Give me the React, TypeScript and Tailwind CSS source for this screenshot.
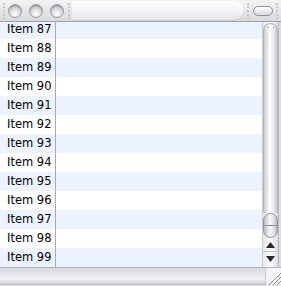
import React from "react";

const items = Array.from({ length: 13 }, (_, i) => 87 + i);

const Light = () => (
  <div className="w-[14px] h-[14px] rounded-full border border-[#9c9ea3] bg-[radial-gradient(circle_at_50%_75%,#ffffff_0%,#dcdde0_45%,#a9abb0_100%)] shadow-[inset_0_1px_1px_rgba(0,0,0,0.25)]" />
);

const Dots = () => <div className="h-[16px] border-l-2 border-dotted border-[#c4c6ca]" />;

const Arrow = ({ up }: { up?: boolean }) => (
  <svg width="9" height="6" viewBox="0 0 9 6">
    {up ? <polygon points="4.5,0 9,6 0,6" fill="#2a2a2a" /> : <polygon points="0,0 9,0 4.5,6" fill="#2a2a2a" />}
  </svg>
);

export default function App() {
  return (
    <div
      className="w-[281px] h-[286px] flex flex-col overflow-hidden bg-[#e4e5e8]"
      style={{ fontFamily: '"DejaVu Sans", "Liberation Sans", sans-serif' }}
    >
      {/* title bar */}
      <div className="h-[22px] flex items-center bg-[linear-gradient(#f4f4f5,#d9dadd)] border-b border-[#9fa2a8] pl-[3px]">
        <Dots />
        <div className="flex gap-[7px] ml-[3px]">
          <Light />
          <Light />
          <Light />
        </div>
        <div className="ml-[4px]">
          <Dots />
        </div>
        <div className="ml-[2px] w-[172px] h-[20px] rounded-r-[10px] bg-[linear-gradient(#ffffff,#f1f2f4_55%,#e2e3e6)] shadow-[inset_0_-1px_0_#c6c8cc]" />
        <div className="ml-[3px]">
          <Dots />
        </div>
        <div className="ml-[4px] w-[20px] h-[10px] rounded-full border border-[#8f9297] bg-[linear-gradient(#ffffff,#d5d7db)]" />
        <div className="ml-[3px]">
          <Dots />
        </div>
      </div>

      {/* content */}
      <div className="flex h-[245px]">
        <div className="flex-1 overflow-hidden">
          <div className="-mt-[2px]">
            {items.map((n, i) => (
              <div key={n} className={`h-[19px] flex ${i % 2 === 0 ? "bg-[#edf3fe]" : "bg-white"}`}>
                <div className="w-[56px] border-r border-[#a7a9ad] pl-[7px] text-[11.5px] leading-[19px] text-black whitespace-nowrap">
                  Item {n}
                </div>
              </div>
            ))}
          </div>
        </div>

        {/* scrollbar */}
        <div className="w-[16px] flex flex-col bg-[linear-gradient(90deg,#e8e9ec,#fbfbfc_50%,#dcdde1)] border-l border-[#c8cace]">
          <div className="mt-[1px] h-[190px] rounded-t-[8px] bg-[linear-gradient(90deg,#c9cbd0,#ffffff_45%,#e3e4e8_80%,#c4c6cb)] border-x border-t border-[#b5b8bd] flex justify-center">
            <div className="mt-[3px] flex gap-[4px]">
              <div className="w-[1px] h-[1px] bg-[#8c8f95]" />
              <div className="w-[1px] h-[1px] bg-[#8c8f95]" />
            </div>
          </div>
          <div className="h-[25px] rounded-[8px] border border-[#8f9298] bg-[linear-gradient(90deg,#b8bbc1,#f7f7f8_45%,#dadce0_80%,#b3b6bc)] flex flex-col justify-center">
            <div className="h-[1px] bg-[#8f9298]" />
          </div>
          <div className="h-[14px] flex items-center justify-center border-b border-[#c3c5ca]">
            <Arrow up />
          </div>
          <div className="h-[14px] flex items-center justify-center">
            <Arrow />
          </div>
        </div>
        <div className="w-[3px] bg-[#dcdde0] border-l border-[#b9bbc0]" />
      </div>

      {/* bottom bar */}
      <div className="h-[18px] flex border-t border-[#b0b3b9]">
        <div className="flex-1 bg-[linear-gradient(#d8d9dd,#f2f2f4_70%,#d0d2d6)] border-b border-[#c2c4c9]" />
        <div className="w-[16px] relative bg-[#f4f4f6] border-l border-[#c9cbcf]">
          <svg className="absolute right-0 bottom-0" width="14" height="14" viewBox="0 0 14 14">
            <line x1="2" y1="14" x2="14" y2="2" stroke="#8a8d93" />
            <line x1="6" y1="14" x2="14" y2="6" stroke="#8a8d93" />
            <line x1="10" y1="14" x2="14" y2="10" stroke="#8a8d93" />
          </svg>
        </div>
      </div>
    </div>
  );
}
